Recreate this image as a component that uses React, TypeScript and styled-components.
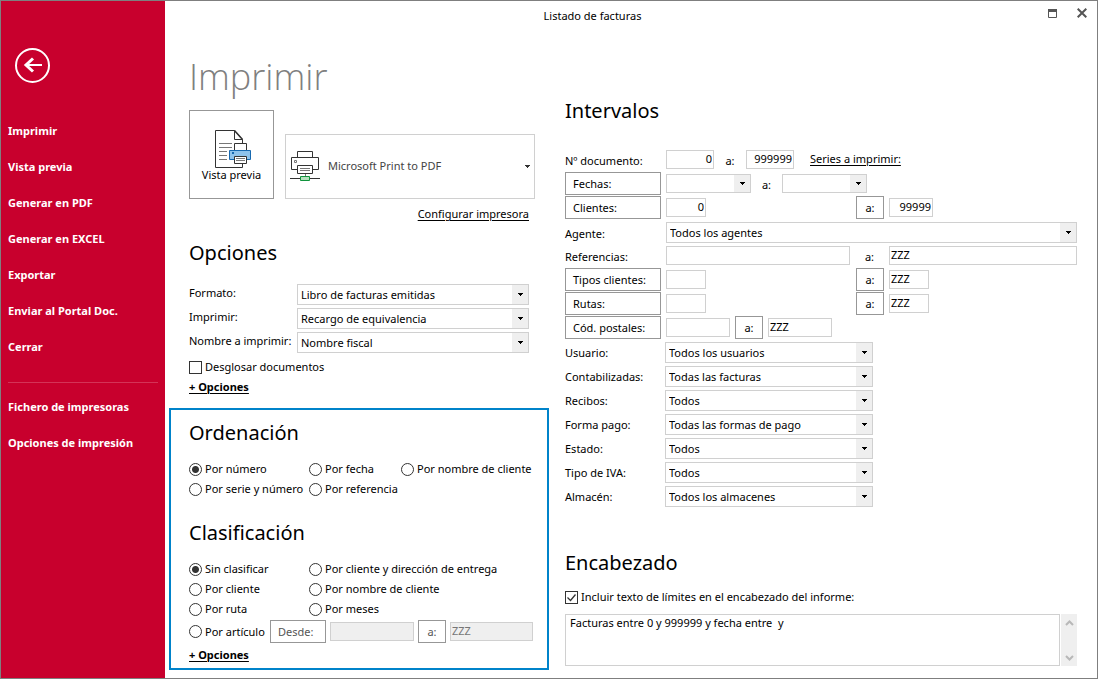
import React, { useState } from "react";
import styled, { createGlobalStyle, css } from "styled-components";

const GlobalStyle = createGlobalStyle`
  *, *::before, *::after { box-sizing: border-box; }
  body {
    margin: 0;
    background: #fff;
    color: #000;
    font: 11px/16px "Noto Sans", "Open Sans", sans-serif;
  }
  button, input, select, textarea { font: inherit; color: inherit; margin: 0; }
`;

const Window = styled.div`
  display: flex;
  min-height: 100vh;
  border: 1px solid #7f7f7f;
  background: #fff;
`;

const Sidebar = styled.nav`
  flex: 0 0 164px;
  padding: 47px 7px 0;
  background: #c8002d;
  color: #fff;
`;

const BackButton = styled.button`
  display: block;
  width: 35px;
  height: 35px;
  margin: 0 7px 30px;
  padding: 0;
  border: 0;
  background: none;
  svg { display: block; }
`;

const NavLink = styled.a`
  display: block;
  color: #fff;
  font-weight: 700;
  line-height: 36px;
  text-decoration: none;
  white-space: nowrap;
`;

const NavDivider = styled.hr`
  height: 1px;
  margin: 17px 0 6px;
  border: 0;
  background: #d43357;
`;

const Main = styled.main`
  flex: 1;
  min-width: 0;
`;

const TitleBar = styled.header`
  display: flex;
  align-items: center;
  height: 30px;
`;

const WindowTitle = styled.div`
  flex: 1;
  text-align: center;
`;

const WindowControls = styled.div`
  display: flex;
  padding-left: 17px;
`;

const ControlButton = styled.button`
  display: grid;
  place-items: center;
  width: 30px;
  height: 24px;
  padding: 0 0 6px;
  border: 0;
  background: none;
`;

const Columns = styled.div`
  display: flex;
  gap: 16px;
  padding: 0 20px 8px 4px;
`;

const LeftColumn = styled.div`
  flex: 0 0 380px;
  min-width: 0;
  padding-top: 22px;
`;

const RightColumn = styled.div`
  flex: 1;
  min-width: 0;
  padding-top: 64px;
`;

const PrintSection = styled.section`
  padding: 0 14px 0 20px;
`;

const PageTitle = styled.h1`
  margin: 0 0 9px;
  color: #7f7f7f;
  font-family: "Open Sans", "Noto Sans", sans-serif;
  font-size: 36px;
  font-weight: 300;
  line-height: 48px;
`;

const Heading = styled.h2<{ $top?: number; $bottom: number }>`
  margin: ${(p) => p.$top ?? 0}px 0 ${(p) => p.$bottom}px;
  font-size: 20px;
  font-weight: 400;
  line-height: 32px;
`;

const PrinterRow = styled.div`
  display: flex;
  align-items: flex-end;
  gap: 11px;
`;

const PreviewButton = styled.button`
  display: flex;
  flex-direction: column;
  align-items: center;
  width: 85px;
  height: 89px;
  padding: 19px 0 0;
  border: 1px solid #979797;
  background: #fff;
  line-height: 14px;
  white-space: nowrap;
`;

const PrinterPicker = styled.label`
  display: flex;
  flex: 1;
  align-items: center;
  height: 65px;
  padding: 0 4px;
  border: 1px solid #d0d0d0;
  color: #444;
`;

const PrinterSelect = styled.select`
  flex: 1;
  height: 63px;
  padding: 0 0 2px 7px;
  border: 0;
  appearance: none;
  background: none;
`;

const TextLink = styled.a<{ $bold?: boolean }>`
  color: #000;
  font-weight: ${(p) => (p.$bold ? 700 : 400)};
  text-decoration: underline;
  text-underline-offset: 2px;
  white-space: nowrap;
`;

const LinkRow = styled.div<{ $top?: number; $end?: boolean }>`
  display: flex;
  justify-content: ${(p) => (p.$end ? "flex-end" : "flex-start")};
  margin-top: ${(p) => p.$top ?? 0}px;
  padding-right: ${(p) => (p.$end ? 6 : 0)}px;
  line-height: ${(p) => (p.$end ? 16 : 20)}px;
`;

const FieldRow = styled.div`
  display: flex;
  align-items: flex-start;
  height: 24px;
`;

const FieldLabel = styled.label<{ $width: number; $line?: number }>`
  flex: 0 0 ${(p) => p.$width}px;
  margin-right: 5px;
  line-height: ${(p) => p.$line ?? 26}px;
  white-space: nowrap;
`;

const boxBorder = css`
  border: 1px solid #d0d0d0;
  border-radius: 0;
  background: #fff;
  outline-offset: -1px;
`;

const SelectFrame = styled.div<{ $width?: number; $compact?: boolean }>`
  display: flex;
  flex: ${(p) => (p.$width ? `0 0 ${p.$width}px` : "1")};
  position: relative;
  height: ${(p) => (p.$compact ? 19 : 21)}px;
  margin-top: 2px;
  ${boxBorder}
  select {
    flex: 1;
    min-width: 0;
    padding: 0 20px 0 3px;
    border: 0;
    appearance: none;
    background: none;
  }
`;

const SelectArrow = styled.span`
  display: grid;
  place-items: center;
  position: absolute;
  inset: 0 0 0 auto;
  width: 16px;
  background: #efefef;
  pointer-events: none;
`;

const TextInput = styled.input<{ $width?: number; $flat?: boolean }>`
  flex: ${(p) => (p.$width ? `0 0 ${p.$width}px` : "1")};
  width: ${(p) => (p.$width ? `${p.$width}px` : "auto")};
  min-width: 0;
  height: 19px;
  margin-top: ${(p) => (p.$flat ? 0 : 2)}px;
  padding: 0 1px 2px;
  ${boxBorder}
  &:disabled { background: #efefef; color: #767676; }
`;

const NumberInput = styled(TextInput)`
  text-align: right;
`;

const PostalFrom = styled(TextInput)`
  margin-right: 5px;
`;

const RangeButton = styled.button<{ $width: number; $center?: boolean; $muted?: boolean }>`
  flex: 0 0 ${(p) => p.$width}px;
  height: 23px;
  margin-right: 5px;
  padding: 0 7px;
  border: 1px solid #979797;
  background: #fff;
  color: ${(p) => (p.$muted ? "#555" : "#000")};
  text-align: ${(p) => (p.$center ? "center" : "left")};
  white-space: nowrap;
`;

const RangeTo = styled.span<{ $width: number }>`
  flex: 0 0 ${(p) => p.$width}px;
  line-height: 26px;
  text-align: center;
`;

const FromCell = styled.div`
  display: flex;
  flex: 0 0 184px;
  margin-right: 6px;
`;

const SeriesLink = styled(TextLink)`
  margin-left: 16px;
  line-height: 22px;
`;

const CheckLabel = styled.label<{ $top: number }>`
  display: flex;
  align-items: center;
  gap: 3px;
  height: 20px;
  margin-top: ${(p) => p.$top}px;
`;

const CheckBox = styled.input.attrs({ type: "checkbox" })`
  flex: none;
  width: 13px;
  height: 13px;
  border: 1px solid #333;
  appearance: none;
  background: #fff;
`;

const CheckMark = styled.span`
  display: grid;
  flex: none;
  svg, input { grid-area: 1 / 1; }
  svg { position: relative; pointer-events: none; }
`;

const HighlightBox = styled.section`
  margin-top: 11px;
  padding: 7px 14px 3px 18px;
  border: 2px solid #0083ca;
`;

const RadioGrid = styled.div`
  display: grid;
  grid-template-columns: 120px 92px auto;
  grid-auto-rows: 20px;
`;

const RadioLabel = styled.label<{ $wide?: boolean }>`
  display: flex;
  align-items: center;
  gap: 3px;
  grid-column: ${(p) => (p.$wide ? "span 2" : "auto")};
  white-space: nowrap;
`;

const Radio = styled.input.attrs({ type: "radio" })`
  flex: none;
  width: 13px;
  height: 13px;
  border: 1px solid #333;
  border-radius: 50%;
  appearance: none;
  background: #fff;
  &:checked { background: radial-gradient(circle, #333 0 3px, #fff 4px); }
`;

const ArticleRow = styled.div`
  display: flex;
  align-items: center;
  gap: 4px;
  height: 23px;
  margin-top: 1px;
  & > button { margin-right: 0; }
`;

const ArticleRadio = styled(RadioLabel)`
  flex: 0 0 77px;
`;

const ReportBox = styled.div`
  display: flex;
  gap: 1px;
  height: 52px;
  margin-top: 7px;
`;

const ReportText = styled.textarea`
  flex: 1;
  min-width: 0;
  padding: 0 4px;
  overflow: hidden;
  resize: none;
  ${boxBorder}
`;

const ScrollTrack = styled.div`
  display: flex;
  flex: 0 0 16px;
  flex-direction: column;
  justify-content: space-between;
  background: #efefef;
`;

const ScrollButton = styled.button`
  display: grid;
  place-items: center;
  height: 17px;
  padding: 0;
  border: 0;
  background: none;
`;

const ArrowGlyph = ({ color = "#000" }: { color?: string }) => (
  <svg width="5" height="3" viewBox="0 0 5 3" aria-hidden="true" shapeRendering="crispEdges">
    <path d="M0 0h5v1H4v1H3v1H2V2H1V1H0z" fill={color} />
  </svg>
);

const BackIcon = () => (
  <svg width="35" height="35" viewBox="0 0 35 35" fill="none" stroke="#fff" aria-hidden="true">
    <circle cx="17.5" cy="17.5" r="16.5" strokeWidth="2" />
    <path d="M27 17H11" strokeWidth="2" />
    <path d="M18 10.500L11 17l7 6.500" strokeWidth="3" />
  </svg>
);

const PreviewIcon = () => (
  <svg width="39" height="38" viewBox="-2 0 39 38" fill="none" aria-hidden="true">
    <path d="M1.500.5h19l8 9v28h-27z" fill="#fff" stroke="#333" />
    <path d="M20.500.5v9h8" stroke="#333" />
    <path d="M20.500.5l8 9" stroke="#333" strokeWidth="1.500" />
    <path d="M5 13.500h13M5 17.500h13M5 21.500h8M5 25.500h8M5 29.500h8" stroke="#777" />
    <path d="M20.500 20.500v-7h12v7" fill="#fff" stroke="#333" />
    <path d="M15.500 20.500h21v9h-21z" fill="#8ec3ec" stroke="#1769b0" />
    <path d="M18 22h2v2h-2z" fill="#1769b0" />
    <path d="M20.500 26.500h12v7h-12z" fill="#fff" stroke="#333" />
    <path d="M22 28.500h9M22 30.500h9" stroke="#777" />
  </svg>
);

const PrinterIcon = () => (
  <svg width="31" height="31" viewBox="0 0 31 31" fill="none" aria-hidden="true">
    <path d="M7.500 6.500v-6h15v6" fill="#fff" stroke="#333" />
    <path d="M7.500 18.500h-6v-12h27v12h-6" fill="#fff" stroke="#333" />
    <path d="M4.500 9.500h2v2h-2z" stroke="#777" />
    <path d="M7.500 14.500h15v8h-15z" fill="#fff" stroke="#333" />
    <path d="M10 17.500h10M10 19.500h10M15.500 23v3" stroke="#777" />
    <path d="M0 27.500h30" stroke="#333" />
    <path d="M10.500 25.500h9v4h-9z" fill="#b4e0bd" stroke="#10933c" />
  </svg>
);

const MaximizeIcon = () => (
  <svg width="9" height="9" viewBox="0 0 9 9" fill="none" aria-hidden="true">
    <path d="M.5.5h8v8h-8z" stroke="#555" />
    <path d="M0 0h9v3H0z" fill="#555" />
  </svg>
);

const CloseIcon = () => (
  <svg width="10" height="10" viewBox="0 0 10 10" fill="none" aria-hidden="true">
    <path d="M.7.7l8.600 8.600M9.300.7L.7 9.300" stroke="#555" strokeWidth="2" />
  </svg>
);

const ScrollIcon = ({ down }: { down?: boolean }) => (
  <svg width="9" height="6" viewBox="0 0 9 6" fill="none" aria-hidden="true">
    <path d={down ? "M1 1l3.500 3.500L8 1" : "M1 5l3.500-3.500L8 5"} stroke="#b8b8b8" strokeWidth="2" />
  </svg>
);

type DropDownProps = { id?: string; label?: string; value: string; width?: number; compact?: boolean };

const DropDown = ({ id, label, value, width, compact }: DropDownProps) => (
  <SelectFrame $width={width} $compact={compact}>
    <select id={id} aria-label={label} defaultValue={value}>
      <option>{value}</option>
    </select>
    <SelectArrow>
      <ArrowGlyph />
    </SelectArrow>
  </SelectFrame>
);

const Check = ({ label, top, initial }: { label: string; top: number; initial: boolean }) => {
  const [checked, setChecked] = useState(initial);
  return (
    <CheckLabel $top={top}>
      <CheckMark>
        <CheckBox checked={checked} onChange={(e) => setChecked(e.target.checked)} />
        {checked && (
          <svg width="13" height="13" viewBox="0 0 13 13" fill="none" aria-hidden="true">
            <path d="M2.500 6.500l3 3 5-6" stroke="#333" strokeWidth="1.300" />
          </svg>
        )}
      </CheckMark>
      {label}
    </CheckLabel>
  );
};

const navItems = ["Imprimir", "Vista previa", "Generar en PDF", "Generar en EXCEL", "Exportar", "Enviar al Portal Doc.", "Cerrar"];
const navSettings = ["Fichero de impresoras", "Opciones de impresión"];

const printOptions = [
  ["formato", "Formato:", "Libro de facturas emitidas"],
  ["imprimir", "Imprimir:", "Recargo de equivalencia"],
  ["nombre", "Nombre a imprimir:", "Nombre fiscal"],
];

const filters = [
  ["usuario", "Usuario:", "Todos los usuarios"],
  ["contabilizadas", "Contabilizadas:", "Todas las facturas"],
  ["recibos", "Recibos:", "Todos"],
  ["pago", "Forma pago:", "Todas las formas de pago"],
  ["estado", "Estado:", "Todos"],
  ["iva", "Tipo de IVA:", "Todos"],
  ["almacen", "Almacén:", "Todos los almacenes"],
];

const orders = ["Por número", "Por fecha", "Por nombre de cliente", "Por serie y número", "Por referencia"];

const groupings = [
  ["Sin clasificar", "Por cliente y dirección de entrega"],
  ["Por cliente", "Por nombre de cliente"],
  ["Por ruta", "Por meses"],
];

export default function App() {
  return (
    <>
      <GlobalStyle />
      <Window>
        <Sidebar>
          <BackButton aria-label="Volver">
            <BackIcon />
          </BackButton>
          {navItems.map((item) => (
            <NavLink key={item} href="#">{item}</NavLink>
          ))}
          <NavDivider />
          {navSettings.map((item) => (
            <NavLink key={item} href="#">{item}</NavLink>
          ))}
        </Sidebar>
        <Main>
          <TitleBar>
            <WindowTitle>Listado de facturas</WindowTitle>
            <WindowControls>
              <ControlButton aria-label="Maximizar"><MaximizeIcon /></ControlButton>
              <ControlButton aria-label="Cerrar ventana"><CloseIcon /></ControlButton>
            </WindowControls>
          </TitleBar>
          <Columns>
            <LeftColumn>
              <PrintSection>
                <PageTitle>Imprimir</PageTitle>
                <PrinterRow>
                  <PreviewButton>
                    <PreviewIcon />
                    Vista previa
                  </PreviewButton>
                  <PrinterPicker>
                    <PrinterIcon />
                    <PrinterSelect aria-label="Impresora" defaultValue="Microsoft Print to PDF">
                      <option>Microsoft Print to PDF</option>
                    </PrinterSelect>
                    <ArrowGlyph color="#333" />
                  </PrinterPicker>
                </PrinterRow>
                <LinkRow $top={7} $end>
                  <TextLink href="#">Configurar impresora</TextLink>
                </LinkRow>
                <Heading $top={15} $bottom={13}>Opciones</Heading>
                {printOptions.map(([id, label, value]) => (
                  <FieldRow key={id}>
                    <FieldLabel htmlFor={id} $width={103} $line={22}>{label}</FieldLabel>
                    <DropDown id={id} value={value} width={232} />
                  </FieldRow>
                ))}
                <Check label="Desglosar documentos" top={3} initial={false} />
                <LinkRow>
                  <TextLink href="#" $bold>+ Opciones</TextLink>
                </LinkRow>
              </PrintSection>

              <HighlightBox>
                <Heading $bottom={10}>Ordenación</Heading>
                <RadioGrid>
                  {orders.map((order, i) => (
                    <RadioLabel key={order}>
                      <Radio name="orden" defaultChecked={i === 0} />
                      {order}
                    </RadioLabel>
                  ))}
                </RadioGrid>
                <Heading $top={18} $bottom={10}>Clasificación</Heading>
                <RadioGrid>
                  {groupings.map(([first, second], i) => (
                    <React.Fragment key={first}>
                      <RadioLabel>
                        <Radio name="clasificacion" defaultChecked={i === 0} />
                        {first}
                      </RadioLabel>
                      <RadioLabel $wide>
                        <Radio name="clasificacion" />
                        {second}
                      </RadioLabel>
                    </React.Fragment>
                  ))}
                </RadioGrid>
                <ArticleRow>
                  <ArticleRadio>
                    <Radio name="clasificacion" />
                    Por artículo
                  </ArticleRadio>
                  <RangeButton $width={56} $muted>Desde:</RangeButton>
                  <TextInput aria-label="Desde artículo" $width={84} $flat disabled />
                  <RangeButton $width={28} $center $muted>a:</RangeButton>
                  <TextInput aria-label="Hasta artículo" $width={83} $flat disabled defaultValue="ZZZ" />
                </ArticleRow>
                <LinkRow $top={2}>
                  <TextLink href="#" $bold>+ Opciones</TextLink>
                </LinkRow>
              </HighlightBox>
            </LeftColumn>

            <RightColumn>
              <Heading $bottom={21}>Intervalos</Heading>
              <FieldRow>
                <FieldLabel htmlFor="documento" $width={96}>Nº documento:</FieldLabel>
                <NumberInput id="documento" $width={48} defaultValue="0" />
                <RangeTo $width={32}>a:</RangeTo>
                <NumberInput aria-label="Hasta documento" $width={48} defaultValue="999999" />
                <SeriesLink href="#">Series a imprimir:</SeriesLink>
              </FieldRow>
              <FieldRow>
                <RangeButton $width={96}>Fechas:</RangeButton>
                <DropDown label="Desde fecha" value="" width={85} compact />
                <RangeTo $width={31}>a:</RangeTo>
                <DropDown label="Hasta fecha" value="" width={85} compact />
              </FieldRow>
              <FieldRow>
                <RangeButton $width={96}>Clientes:</RangeButton>
                <FromCell>
                  <NumberInput aria-label="Desde cliente" $width={40} defaultValue="0" />
                </FromCell>
                <RangeButton $width={28} $center>a:</RangeButton>
                <NumberInput aria-label="Hasta cliente" $width={44} defaultValue="99999" />
              </FieldRow>
              <FieldRow>
                <FieldLabel htmlFor="agente" $width={96} $line={28}>Agente:</FieldLabel>
                <DropDown id="agente" value="Todos los agentes" />
              </FieldRow>
              <FieldRow>
                <FieldLabel htmlFor="referencias" $width={96}>Referencias:</FieldLabel>
                <TextInput id="referencias" $width={184} />
                <RangeTo $width={39}>a:</RangeTo>
                <TextInput aria-label="Hasta referencia" defaultValue="ZZZ" />
              </FieldRow>
              {["Tipos clientes:", "Rutas:"].map((name) => (
                <FieldRow key={name}>
                  <RangeButton $width={96}>{name}</RangeButton>
                  <FromCell>
                    <TextInput aria-label={`${name} desde`} $width={40} />
                  </FromCell>
                  <RangeButton $width={28} $center>a:</RangeButton>
                  <TextInput aria-label={`${name} hasta`} $width={40} defaultValue="ZZZ" />
                </FieldRow>
              ))}
              <FieldRow>
                <RangeButton $width={96}>Cód. postales:</RangeButton>
                <PostalFrom aria-label="Desde código postal" $width={64} />
                <RangeButton $width={28} $center>a:</RangeButton>
                <TextInput aria-label="Hasta código postal" $width={64} defaultValue="ZZZ" />
              </FieldRow>
              {filters.map(([id, label, value]) => (
                <FieldRow key={id}>
                  <FieldLabel htmlFor={id} $width={95}>{label}</FieldLabel>
                  <DropDown id={id} value={value} width={208} />
                </FieldRow>
              ))}
              <Heading $top={39} $bottom={8}>Encabezado</Heading>
              <Check label="Incluir texto de límites en el encabezado del informe:" top={0} initial />
              <ReportBox>
                <ReportText aria-label="Texto del encabezado" defaultValue="Facturas entre 0 y 999999 y fecha entre  y" />
                <ScrollTrack>
                  <ScrollButton aria-label="Subir"><ScrollIcon /></ScrollButton>
                  <ScrollButton aria-label="Bajar"><ScrollIcon down /></ScrollButton>
                </ScrollTrack>
              </ReportBox>
            </RightColumn>
          </Columns>
        </Main>
      </Window>
    </>
  );
}
